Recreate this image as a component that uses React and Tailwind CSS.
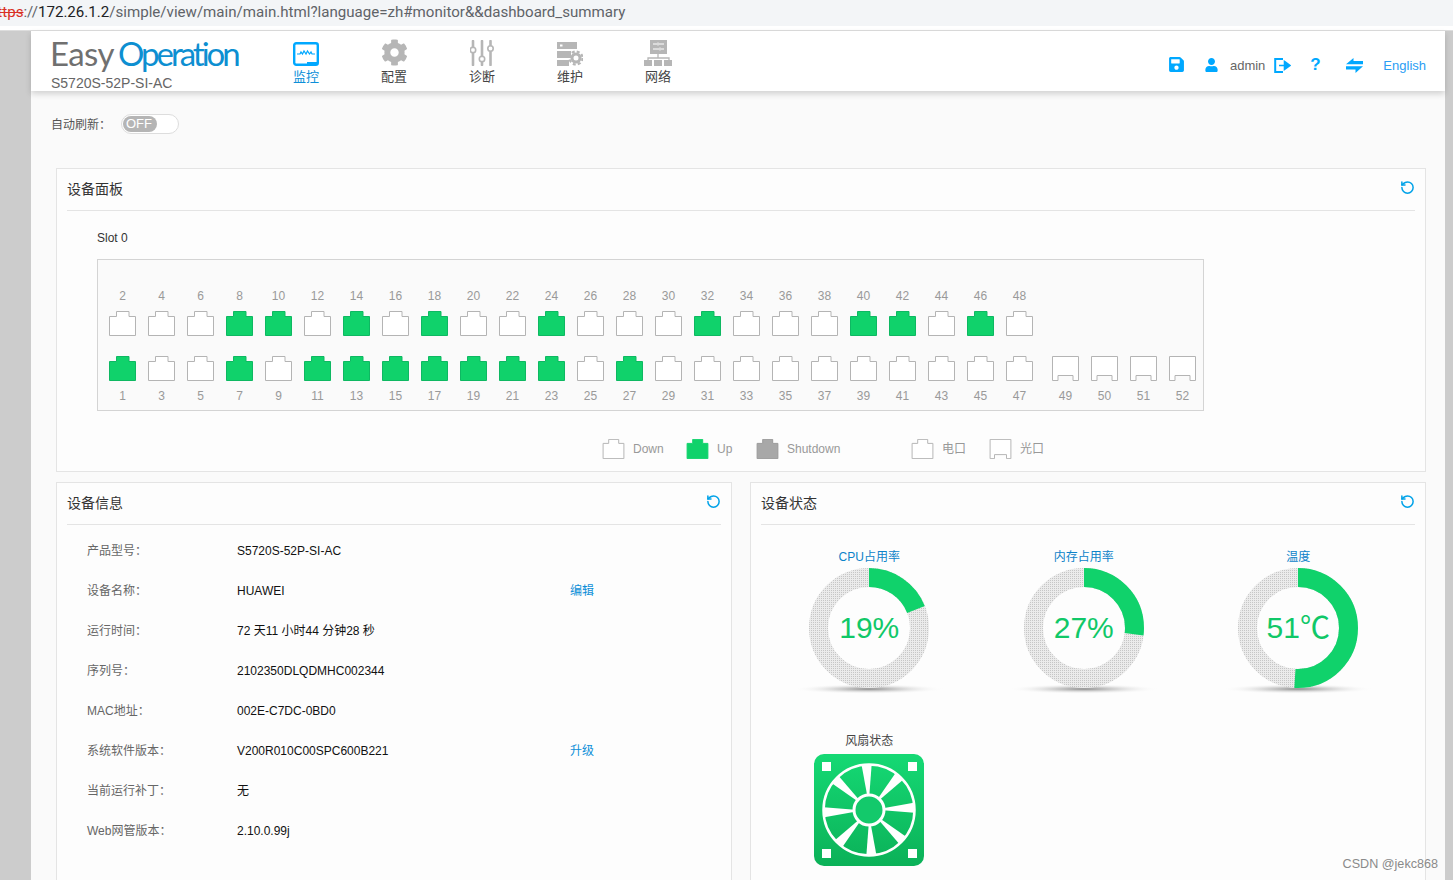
import React from 'react';
import { FaCog, FaSave, FaUser } from 'react-icons/fa';
import { RotateCcw } from 'lucide-react';

const UP_PORTS = [8, 10, 14, 18, 24, 32, 40, 42, 46, 1, 7, 11, 13, 15, 17, 19, 21, 23, 27];
const TOP_ROW = Array.from({ length: 24 }, (_, i) => (i + 1) * 2);
const BOTTOM_ROW = Array.from({ length: 24 }, (_, i) => i * 2 + 1);

const INFO_ROWS = [
  { label: '产品型号：', value: 'S5720S-52P-SI-AC' },
  { label: '设备名称：', value: 'HUAWEI', link: '编辑' },
  { label: '运行时间：', value: '72 天11 小时44 分钟28 秒' },
  { label: '序列号：', value: '2102350DLQDMHC002344' },
  { label: 'MAC地址：', value: '002E-C7DC-0BD0' },
  { label: '系统软件版本：', value: 'V200R010C00SPC600B221', link: '升级' },
  { label: '当前运行补丁：', value: '无' },
  { label: 'Web网管版本：', value: '2.10.0.99j' },
];

const GAUGES = [
  { title: 'CPU占用率', text: '19%', pct: 19, id: 'a' },
  { title: '内存占用率', text: '27%', pct: 27, id: 'b' },
  { title: '温度', text: '51℃', pct: 51, id: 'c' },
];

function EthPort({ fill = '#ffffff', stroke = '#b4b4b4', small = false }) {
  return (
    <svg width={small ? 23 : 27} height={small ? 20 : 25} viewBox="0 0 27 25" className="block">
      <path d="M.5 5.5H7.5V.5H20V5.5H26.5V24.5H.5Z" fill={fill} stroke={stroke} strokeWidth={small ? 1.2 : 1} />
    </svg>
  );
}

function SfpPort({ small = false }) {
  return (
    <svg width={small ? 23 : 27} height={small ? 20 : 25} viewBox="0 0 27 25" className="block">
      <path d="M.5 .5H26.5V24.5H21V19.5H6V24.5H.5Z" fill="#ffffff" stroke="#b4b4b4" strokeWidth={small ? 1.2 : 1} />
    </svg>
  );
}

function PortCell({ n, labelOnTop }) {
  const up = UP_PORTS.includes(n);
  return (
    <div className="w-[39px] flex flex-col items-center">
      {labelOnTop && <span className="h-[21px] text-[12px] leading-[12px] text-[#999999]">{n}</span>}
      {up ? <EthPort fill="#10d26b" stroke="#0eb862" /> : <EthPort />}
      {!labelOnTop && <span className="h-[14px] mt-[8px] text-[12px] leading-[14px] text-[#999999]">{n}</span>}
    </div>
  );
}

function Panel({ title, className, children }) {
  return (
    <div className={`border border-[#e4e4e4] bg-[#fdfdfd] px-[10px] ${className}`}>
      <div className="h-[42px] border-b border-[#e4e4e4] flex items-center justify-between">
        <span className="text-[14px] text-[#333333]">{title}</span>
        <RotateCcw className="w-[15px] h-[15px] text-[#00a2e8] mb-[4px]" strokeWidth={2.4} />
      </div>
      {children}
    </div>
  );
}

function Gauge({ title, text, pct, id }) {
  return (
    <div className="flex flex-col items-center">
      <div className="h-[20px] pt-[1px] text-[12px] leading-[20px] text-[#0d83c9]">{title}</div>
      <div className="relative w-[160px] h-[134px]">
        <svg width="160" height="134" className="block overflow-visible">
          <defs>
            <pattern id={`dots-${id}`} width="2" height="2" patternUnits="userSpaceOnUse">
              <rect width="2" height="2" fill="#ebebeb" />
              <rect width="1" height="1" fill="#c6c6c6" />
            </pattern>
            <radialGradient id={`shade-${id}`}>
              <stop offset="0%" stopColor="#8c8c8c" />
              <stop offset="45%" stopColor="#c8c8c8" stopOpacity="0.7" />
              <stop offset="100%" stopColor="#ffffff" stopOpacity="0" />
            </radialGradient>
          </defs>
          <ellipse cx="80" cy="123" rx="76" ry="5" fill={`url(#shade-${id})`} />
          <circle cx="80" cy="62" r="50.5" fill="none" stroke={`url(#dots-${id})`} strokeWidth="19" />
          <circle
            cx="80"
            cy="62"
            r="50.5"
            fill="none"
            stroke="#10d26b"
            strokeWidth="19"
            pathLength="100"
            strokeDasharray={`${pct} 100`}
            transform="rotate(-90 80 62)"
          />
        </svg>
        <div className="absolute left-0 right-0 top-[44px] text-center text-[30px] leading-[36px] text-[#10c868]">{text}</div>
      </div>
    </div>
  );
}

function FanIcon() {
  const spokes = Array.from({ length: 8 }, (_, i) => i * 45 - 3);
  return (
    <svg width="110" height="112" viewBox="0 0 110 112" className="block">
      <defs>
        <linearGradient id="fan-bg" x1="0" y1="0" x2="0" y2="1">
          <stop offset="0%" stopColor="#15d974" />
          <stop offset="100%" stopColor="#0bb158" />
        </linearGradient>
      </defs>
      <rect width="110" height="112" rx="10" fill="url(#fan-bg)" />
      <rect x="8" y="8" width="9" height="9" fill="#ffffff" />
      <rect x="94" y="8" width="9" height="9" fill="#ffffff" />
      <rect x="8" y="95" width="9" height="9" fill="#ffffff" />
      <rect x="94" y="95" width="9" height="9" fill="#ffffff" />
      <circle cx="55" cy="56" r="45.5" fill="none" stroke="#ffffff" strokeWidth="2.5" />
      {spokes.map((deg) => (
        <polygon key={deg} points="54,42 56,42 60,11 50,11" fill="#ffffff" transform={`rotate(${deg} 55 56)`} />
      ))}
      <circle cx="55" cy="56" r="15" fill="#13c96b" stroke="#ffffff" strokeWidth="3" />
    </svg>
  );
}

function NavItem({ label, active, children }) {
  return (
    <div className="w-[88px] flex flex-col items-center">
      <div className="h-[30px] flex items-end">{children}</div>
      <span className={`mt-[3px] text-[13px] leading-[16px] ${active ? 'text-[#0d8fd8]' : 'text-[#444444]'}`}>{label}</span>
    </div>
  );
}

export default function App() {
  return (
    <div className="w-[1453px] h-[880px] overflow-hidden bg-white flex flex-col relative font-['Liberation_Sans','Noto_Sans_CJK_SC',sans-serif]">
      <div className="h-[26px] shrink-0 bg-[#f3f5f7] overflow-hidden whitespace-nowrap font-['Roboto','Noto_Sans_CJK_SC',sans-serif] text-[15.1px] leading-[25px] text-[#5f6368]">
        <div className="-ml-[11px]">
          <span className="text-[#d93025] line-through">https</span>://<span className="text-[#202124]">172.26.1.2</span>/simple/view/main/main.html?language=zh#monitor&&dashboard_summary
        </div>
      </div>
      <div className="h-[5px] shrink-0 bg-white border-b border-[#dddddd]" />

      <div className="flex-1 flex min-h-0">
        <div className="w-[31px] shrink-0 bg-[#cccccc]" />

        <div className="flex-1 min-w-0 bg-[#fafafa] flex flex-col">
          <div className="h-[60px] shrink-0 bg-white shadow-[0_3px_6px_rgba(0,0,0,0.16)] flex items-start relative">
            <div className="w-[231px] shrink-0 pl-[19px]">
              <div className="h-[42px] pt-[1px] whitespace-nowrap font-['Lato','Noto_Sans',sans-serif] text-[33px] leading-[42px]">
                <span className="text-[#707070] tracking-[-0.6px]">Easy</span>
                <span className="text-[#0d8fd1] tracking-[-3px] ml-[4px]">Operation</span>
              </div>
              <div className="pl-[1px] text-[14px] leading-[16px] mt-[2px] text-[#666666]">S5720S-52P-SI-AC</div>
            </div>

            <div className="flex pt-[5px]">
              <NavItem label="监控" active>
                <svg width="26" height="24" viewBox="0 0 26 24" fill="none">
                  <rect x="1.2" y="1.2" width="23.6" height="21.6" rx="2" stroke="#00a8ff" strokeWidth="2.4" />
                  <path d="M4 12h3l1-2 1.5 2 1.5-3 2 3 1.5-3 2 3 1.5-2 1 2h3" stroke="#00a8ff" strokeWidth="1.2" />
                  <path d="M14 23v-3h11v3z" fill="#00a8ff" />
                </svg>
              </NavItem>
              <NavItem label="配置">
                <FaCog className="w-[27px] h-[27px] text-[#b6b6b6]" />
              </NavItem>
              <NavItem label="诊断">
                <svg width="24" height="26" viewBox="0 0 24 26" fill="none" stroke="#b6b6b6">
                  <path d="M3 1v6M3 13v12M12 1v15M12 22v3M20.5 1v4M20.5 12v13" strokeWidth="2.6" strokeLinecap="round" />
                  <circle cx="3" cy="10" r="2.7" strokeWidth="1.6" />
                  <circle cx="12" cy="19" r="2.7" strokeWidth="1.6" />
                  <circle cx="20.5" cy="8.5" r="2.7" strokeWidth="1.6" />
                </svg>
              </NavItem>
              <NavItem label="维护">
                <svg width="26" height="25" viewBox="0 0 26 25" fill="#b6b6b6">
                  <rect x="0" y="1" width="20" height="7" />
                  <rect x="0" y="10" width="14" height="7" />
                  <rect x="0" y="19" width="12" height="6" />
                  <rect x="3" y="3.5" width="2.5" height="2" fill="#ffffff" />
                  <circle cx="19" cy="17" r="4" fill="none" stroke="#b6b6b6" strokeWidth="3" />
                  <circle cx="19" cy="17" r="6.5" fill="none" stroke="#b6b6b6" strokeWidth="2.2" strokeDasharray="3 2.1" />
                </svg>
              </NavItem>
              <NavItem label="网络">
                <svg width="28" height="26" viewBox="0 0 28 26" fill="#b6b6b6">
                  <rect x="6" y="0" width="17" height="14" />
                  <path d="M9 4h4M15 4h5M9 9h6M17 9h3M14 2.5v3M16 7.5v3" stroke="#ffffff" strokeWidth="1" />
                  <path d="M14 14v4M4 20v-2h21v2" fill="none" stroke="#b6b6b6" strokeWidth="1.3" />
                  <rect x="0" y="20" width="8" height="6" />
                  <rect x="10" y="20" width="8" height="6" />
                  <rect x="20" y="20" width="8" height="6" />
                </svg>
              </NavItem>
            </div>

            <div className="absolute right-[19px] top-[26px] flex items-center h-[16px] text-[14px]">
              <FaSave className="w-[17px] h-[17px] text-[#00a8ff] -mt-[1px]" />
              <FaUser className="w-[13px] h-[14px] text-[#00a8ff] ml-[20px]" />
              <span className="ml-[12px] mt-[1px] text-[#666666] text-[13px]">admin</span>
              <svg width="17" height="15" viewBox="0 0 17 15" fill="none" className="ml-[9px]">
                <path d="M9 1H1.2v13H9" stroke="#00a8ff" strokeWidth="2" />
                <path d="M5 7.5h7M10.5 3.5 16 7.5l-5.5 4z" stroke="#00a8ff" strokeWidth="1.6" fill="#00a8ff" />
              </svg>
              <span className="ml-[19px] w-[12px] text-[#00a8ff] text-[17px] font-bold">?</span>
              <svg width="17" height="15" viewBox="0 0 17 15" fill="#00a8ff" className="ml-[24px]">
                <path d="M0 6.2 7.5 0v3H17v3.2z" />
                <path d="M17 8.2 9.5 15v-3.4H0V8.2z" />
              </svg>
              <span className="ml-[20px] mt-[1px] text-[#2a9df4] text-[13px]">English</span>
            </div>
          </div>

          <div className="pl-[25px] pr-[19px] flex-1 min-h-0">
            <div className="h-[77px] flex items-start pt-[23px]">
              <span className="text-[12px] leading-[22px] text-[#555555] w-[70px] -ml-[5px]">自动刷新：</span>
              <div className="w-[58px] h-[20px] rounded-full border border-[#dddddd] bg-white p-[1px]">
                <div className="w-[34px] h-[16px] rounded-full bg-[#b5b5b5] text-white text-[13px] leading-[16px] pl-[3px]">OFF</div>
              </div>
            </div>

            <Panel title="设备面板" className="h-[304px]">
              <div className="pl-[30px] pt-[20px] text-[12px] leading-[14px] text-[#333333]">Slot 0</div>
              <div className="ml-[30px] mt-[14px] w-[1107px] h-[152px] border border-[#d4d4d4] bg-[#fafafa] pl-[5px] pt-[30px] flex">
                <div className="flex flex-col gap-[20px]">
                  <div className="flex">{TOP_ROW.map((n) => <PortCell key={n} n={n} labelOnTop />)}</div>
                  <div className="flex">{BOTTOM_ROW.map((n) => <PortCell key={n} n={n} />)}</div>
                </div>
                <div className="ml-[7px] pt-[66px] flex">
                  {[49, 50, 51, 52].map((n) => (
                    <div key={n} className="w-[39px] flex flex-col items-center">
                      <SfpPort />
                      <span className="mt-[8px] text-[12px] leading-[14px] text-[#999999]">{n}</span>
                    </div>
                  ))}
                </div>
              </div>
              <div className="mt-[27px] pl-[535px] flex items-center h-[22px] text-[12px] text-[#999999]">
                <EthPort small />
                <span className="ml-[8px] w-[53px]">Down</span>
                <EthPort small fill="#10d26b" stroke="#10d26b" />
                <span className="ml-[8px] w-[39px]">Up</span>
                <EthPort small fill="#a8a8a8" stroke="#999999" />
                <span className="ml-[8px] w-[124px]">Shutdown</span>
                <EthPort small />
                <span className="ml-[8px] w-[47px]">电口</span>
                <SfpPort small />
                <span className="ml-[8px]">光口</span>
              </div>
            </Panel>

            <div className="mt-[10px] flex gap-[18px]">
              <Panel title="设备信息" className="w-[676px] h-[500px]">
                <div className="pt-[6px] pl-[20px]">
                  {INFO_ROWS.map((row) => (
                    <div key={row.label} className="h-[40px] flex items-center text-[12px]">
                      <span className="w-[150px] text-[#666666]">{row.label}</span>
                      <span className="w-[333px] text-[#111111]">{row.value}</span>
                      {row.link && <span className="text-[#0d8fd8]">{row.link}</span>}
                    </div>
                  ))}
                </div>
              </Panel>

              <Panel title="设备状态" className="w-[676px] h-[500px]">
                <div className="grid grid-cols-[214.5px_214.5px_214.5px] pt-[21px] pl-[1px]">
                  {GAUGES.map((g) => <Gauge key={g.id} {...g} />)}
                  <div className="flex flex-col items-center mt-[31px]">
                    <div className="h-[23px] text-[12px] leading-[20px] text-[#444444]">风扇状态</div>
                    <FanIcon />
                  </div>
                </div>
              </Panel>
            </div>
          </div>
        </div>

        <div className="w-[8px] shrink-0 bg-[#cccccc]" />
      </div>

      <div className="absolute right-[15px] bottom-[8px] text-[12.6px] leading-[16px] text-[#8a8a8a]">CSDN @jekc868</div>
    </div>
  );
}
